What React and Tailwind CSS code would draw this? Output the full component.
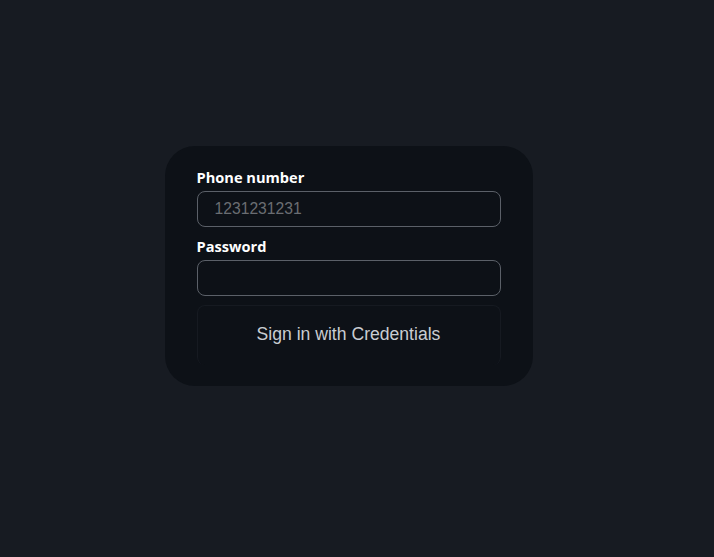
import React from 'react';

const labelFont = { fontFamily: '"Open Sans", "Noto Sans", sans-serif' };

export default function App() {
  return (
    <div className="min-h-screen w-full bg-[#171b22] flex justify-center pt-[146px] pr-[17px]">
      <div className="w-[368px] h-[240px] rounded-[30px] bg-[#0d1117] px-8 pt-[20px]">
        <form className="flex flex-col" onSubmit={e => e.preventDefault()}>
          <label className="text-[14.6px] font-bold text-white leading-[22px] mb-[3px]" style={labelFont}>
            Phone number
          </label>
          <input
            type="text"
            placeholder="1231231231"
            className="h-[36px] w-full rounded-lg border border-[#5b6068] bg-[#0d1117] px-[17px] text-[15.7px] text-gray-300 placeholder:text-[#6a6d72] outline-none font-['Liberation_Sans',Arial,sans-serif]"
          />
          <label className="mt-[8px] text-[14.6px] font-bold text-white leading-[22px] mb-[3px]" style={labelFont}>
            Password
          </label>
          <input
            type="password"
            className="h-[36px] w-full rounded-lg border border-[#5b6068] bg-[#0d1117] px-[17px] text-[16px] text-gray-300 outline-none"
          />
          <button
            type="submit"
            className="mt-[9px] h-[60px] w-full rounded-lg border border-b-0 border-[#161a21] bg-[#0d1117] pb-[2px] text-[17.6px] text-[#c9cdd2] font-['Liberation_Sans',Arial,sans-serif]"
          >
            Sign in with Credentials
          </button>
        </form>
      </div>
    </div>
  );
}
